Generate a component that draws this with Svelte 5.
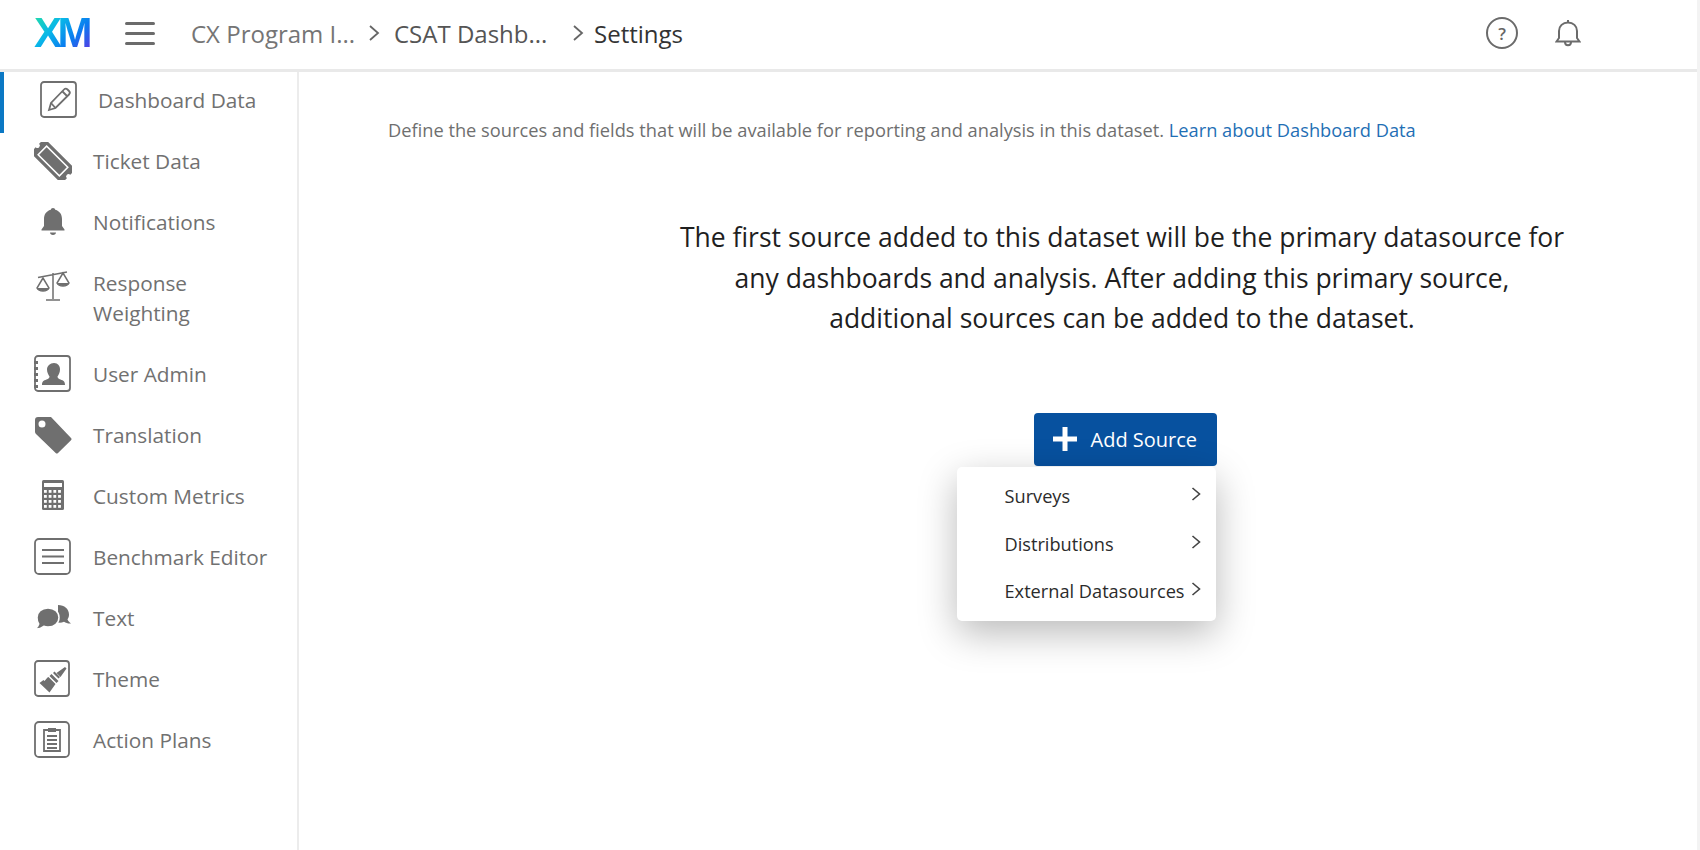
<script>
  const items = [
    { key: 'pencil', label: 'Dashboard Data', active: true },
    { key: 'ticket', label: 'Ticket Data' },
    { key: 'bell', label: 'Notifications' },
    { key: 'scale', label: 'Response Weighting', tall: true },
    { key: 'user', label: 'User Admin' },
    { key: 'tag', label: 'Translation' },
    { key: 'calc', label: 'Custom Metrics' },
    { key: 'lines', label: 'Benchmark Editor' },
    { key: 'chat', label: 'Text' },
    { key: 'brush', label: 'Theme' },
    { key: 'plan', label: 'Action Plans' }
  ];
  const menu = ['Surveys', 'Distributions', 'External Datasources'];
  const calcCells = [];
  for (let r = 0; r < 4; r++) for (let c = 0; c < 4; c++) calcCells.push([10 + c * 4.7, 13 + r * 5]);
  const notches = [[-3, 9], [41, 9], [-3, 29], [41, 29], [-3, 19], [41, 19]];
</script>

<div class="page">
  <header class="top">
    <span class="logo">XM</span>
    <div class="burger"><i></i><i></i><i></i></div>
    <nav class="crumbs">
      <span class="crumb first">CX Program I...</span>
      <svg class="sep" viewBox="0 0 12 18"><path d="M2 2l8 7-8 7" /></svg>
      <span class="crumb second">CSAT Dashb...</span>
      <svg class="sep" viewBox="0 0 12 18"><path d="M2 2l8 7-8 7" /></svg>
      <span class="crumb last">Settings</span>
    </nav>
    <div class="tools">
      <span class="help">?</span>
      <svg class="ring" viewBox="0 0 26 28">
        <path d="M1.500 22.500h23l-2.500-3.500V12c0-5-3.800-8.500-9-8.500S4 7 4 12v7z" />
        <path d="M10 23c0 2 1.300 3.200 3 3.200s3-1.200 3-3.200" />
        <path d="M13 3.500V1" />
      </svg>
    </div>
  </header>

  <div class="body">
    <aside class="side">
      {#each items as item}
        <div class="row" class:active={item.active} class:tall={item.tall}>
          <span class="ico">
            {#if item.key === 'pencil'}
              <svg viewBox="0 0 38 38" class="line">
                <rect x="1" y="1" width="35" height="35" rx="3" />
                <path d="M9 29l2-7L24 8.500c1-1 2.500-1 3.500 0l1.500 1.500c1 1 1 2.500 0 3.500L15.500 27z" />
                <path d="M11 22l4.500 5M22.500 10.500l5 5" />
              </svg>
            {:else if item.key === 'ticket'}
              <svg viewBox="0 0 38 38">
                <g transform="rotate(45 19 19)">
                  <rect class="fill" x="-3" y="9" width="44" height="20" rx="1.500" />
                  <rect class="cut" x="4" y="13" width="30" height="12" />
                  {#each notches as n}
                    <circle class="hole" cx={n[0]} cy={n[1]} r="2.400" />
                  {/each}
                </g>
              </svg>
            {:else if item.key === 'bell'}
              <svg viewBox="0 0 38 38" class="small">
                <path class="fill" d="M19 5c1.300 0 2 .8 2.200 1.800C26 8 28 12 28 16v7l2.500 3.500v1h-23v-1L10 23v-7c0-4 2-8 6.800-9.200C17 5.800 17.700 5 19 5zM16 29.500h6c0 1.500-1.300 2.500-3 2.500s-3-1-3-2.500z" />
              </svg>
            {:else if item.key === 'scale'}
              <svg viewBox="0 0 38 38" class="line thin">
                <path d="M19 5v26M12 32h14M4 9.500L33 4" />
                <path d="M9 10L3 20c2 4 10 4 12 0zM29 5l-6 10c2 4 10 4 12 0z" />
                <path class="fill" d="M3 20h12c-1 4-11 4-12 0zM23 15h12c-1 4-11 4-12 0z" />
              </svg>
            {:else if item.key === 'user'}
              <svg viewBox="0 0 38 38">
                <rect class="outline" x="1" y="1" width="35" height="35" rx="3" />
                <path class="fill" d="M0 6h4v3H0zM0 12h4v3H0zM0 18h4v3H0zM0 24h4v3H0zM0 30h4v3H0z" />
                <path class="fill" d="M20 8c4 0 6 3 6 6.500 0 3-1.500 5.500-2.500 7 0 1.500 1 2.300 3 3 3 1 4.500 2 4.500 5.500H8c0-3.500 1.500-4.500 4.500-5.500 2-.7 3-1.500 3-3-1-1.500-2.500-4-2.500-7C13 11 16 8 20 8z" />
              </svg>
            {:else if item.key === 'tag'}
              <svg viewBox="0 0 38 38">
                <path class="fill" fill-rule="evenodd" d="M4 1h13l20 21c.7.800.7 1.500 0 2.300L24 37c-.8.700-1.500.7-2.300 0L2 18C1 17 1 16 1 15V4c0-2 1-3 3-3zm4 3.500a3.500 3.500 0 100 7 3.500 3.500 0 000-7z" />
              </svg>
            {:else if item.key === 'calc'}
              <svg viewBox="0 0 38 38">
                <rect class="fill" x="8" y="3" width="22" height="30" rx="1.500" />
                <rect class="hole" x="10" y="6" width="18" height="4" />
                {#each calcCells as c}
                  <rect class="hole" x={c[0]} y={c[1]} width="2.800" height="2.800" />
                {/each}
              </svg>
            {:else if item.key === 'lines'}
              <svg viewBox="0 0 38 38" class="line">
                <rect x="1" y="1" width="35" height="35" rx="4" />
                <path d="M8 12h22M8 18.500h22M8 25h22" />
              </svg>
            {:else if item.key === 'chat'}
              <svg viewBox="0 0 38 38">
                <path class="fill" d="M24 6c6.500 0 11 4 11 9.500 0 2-.6 3.500-1.500 5 .5 1.500 1.800 2.800 3.500 4-2.800.2-5-.4-7-1.700-2 .8-4 1-6 .7z" />
                <path class="fill knock" d="M14 9c6.500 0 11 4 11 9.500S20.500 28 14 28c-1.500 0-3-.2-4.200-.7C7 29.500 4 30.300 1 30c2-1.500 3.200-3 3.700-5C3.500 23.300 3 21 3 18.500 3 13 7.500 9 14 9z" />
              </svg>
            {:else if item.key === 'brush'}
              <svg viewBox="0 0 38 38">
                <rect class="outline" x="1" y="1" width="34" height="35" rx="3" />
                <path class="fill" d="M31 7l1.500 1.500-6 8.500-4-4zM20.500 11.500l5.500 5.500-1.500 1.500-5.500-5.500zM17.500 14l7 7-2 2-7-7zM14.500 17l7 7-6 8.500-10-9.500 4-3 1 1 3-3.500z" />
              </svg>
            {:else}
              <svg viewBox="0 0 38 38" class="line">
                <rect x="1" y="1" width="34" height="35" rx="4" />
                <path d="M10 9h16v21H10zM13 15h10M13 19h10M13 23h10M13 27h10" />
                <path class="fill" d="M14 7h8v4h-8z" />
              </svg>
            {/if}
          </span>
          <span class="label">{item.label}</span>
        </div>
      {/each}
    </aside>

    <main class="main">
      <p class="intro">
        Define the sources and fields that will be available for reporting and analysis in this dataset.
        <a href="#learn">Learn about Dashboard Data</a>
      </p>
      <div class="empty">
        <h2>The first source added to this dataset will be the primary datasource for any dashboards and analysis. After adding this primary source, additional sources can be added to the dataset.</h2>
        <div class="add">
          <button class="btn">
            <svg viewBox="0 0 24 24"><path d="M9.500 0h5v9.500H24v5h-9.500V24h-5v-9.500H0v-5h9.500z" /></svg>
            Add Source
          </button>
          <ul class="menu">
            {#each menu as m}
              <li>
                <span>{m}</span>
                <svg viewBox="0 0 10 16"><path d="M1.500 2l7 6-7 6" /></svg>
              </li>
            {/each}
          </ul>
        </div>
      </div>
    </main>
  </div>
</div>

<style>
  :global(body) {
    margin: 0;
    background: #fff;
  }
  .page {
    width: 1700px;
    height: 850px;
    display: flex;
    flex-direction: column;
    overflow: hidden;
    font-family: "Open Sans", "Liberation Sans", sans-serif;
    color: #6f6f6f;
    box-sizing: border-box;
    border-right: 3px solid #f3f3f3;
  }
  .top {
    flex: none;
    display: flex;
    align-items: center;
    border-bottom: 3px solid #e9e9e9;
    padding: 0 0 3px 34px;
    height: 66px;
  }
  .logo {
    width: 58px;
    font-family: "Liberation Sans", sans-serif;
    font-weight: 700;
    font-size: 42px;
    letter-spacing: -4.500px;
    line-height: 42px;
    background: linear-gradient(135deg, #25e0a0 0%, #09b8e8 35%, #0a7bf0 65%, #6a2be0 100%);
    -webkit-background-clip: text;
    background-clip: text;
    color: transparent;
  }
  .burger {
    margin-left: 33px;
    width: 30px;
    display: flex;
    flex-direction: column;
    gap: 7px;
  }
  .burger i {
    height: 3px;
    background: #6b6b6b;
    border-radius: 2px;
  }
  .crumbs {
    margin-left: 36px;
    display: flex;
    align-items: center;
    font-size: 24px;
    white-space: nowrap;
  }
  .crumb.first { width: 177px; color: #757575; }
  .crumb.second { width: 178px; color: #555; margin-left: 14px; }
  .crumb.last { color: #333; margin-left: 10px; }
  .sep {
    width: 12px;
    height: 18px;
    fill: none;
    stroke: #666;
    stroke-width: 1.800;
  }
  .tools {
    margin-left: auto;
    margin-right: 116px;
    display: flex;
    align-items: center;
    gap: 37px;
  }
  .help {
    width: 28px;
    height: 28px;
    border: 2px solid #6b6b6b;
    border-radius: 50%;
    display: flex;
    align-items: center;
    justify-content: center;
    font-size: 17px;
    font-weight: 600;
    color: #666;
  }
  .ring {
    width: 26px;
    height: 28px;
    fill: none;
    stroke: #6b6b6b;
    stroke-width: 2;
  }
  .body {
    flex: 1;
    display: flex;
    min-height: 0;
  }
  .side {
    width: 297px;
    flex: none;
    border-right: 2px solid #ececec;
  }
  .row {
    display: flex;
    align-items: center;
    height: 61px;
    box-sizing: border-box;
    padding: 0 0 5px 34px;
    font-size: 20.800px;
    line-height: 30px;
    color: #717171;
  }
  .row.active {
    border-left: 4px solid #0b78c4;
    padding-left: 36px;
  }
  .row.tall {
    height: 91px;
    align-items: flex-start;
    padding-top: 13px;
  }
  .ico {
    width: 59px;
    flex: none;
    display: flex;
  }
  .row.active .ico { width: 58px; }
  .ico svg {
    width: 38px;
    height: 38px;
  }
  .fill { fill: #6f6f6f; stroke: none; }
  .hole { fill: #fff; }
  .cut { fill: none; stroke: #fff; stroke-width: 1.500; }
  .knock { stroke: #fff; stroke-width: 1.500; }
  .outline { fill: none; stroke: #6f6f6f; stroke-width: 1.800; }
  .line {
    fill: none;
    stroke: #6f6f6f;
    stroke-width: 1.800;
  }
  .line.thin { stroke-width: 1.500; }
  .label { width: 190px; }
  .main {
    flex: 1;
    padding: 43px 0 0 89px;
  }
  .intro {
    margin: 0;
    font-size: 18.250px;
    line-height: 30px;
    color: #6f6f6f;
    white-space: nowrap;
  }
  .intro a {
    color: #1f6fb5;
    text-decoration: none;
  }
  .empty {
    margin: 72px 0 0 284px;
    width: 900px;
    text-align: center;
    display: flex;
    flex-direction: column;
    align-items: center;
  }
  h2 {
    margin: 0;
    font-weight: 400;
    font-size: 26.500px;
    line-height: 40.500px;
    color: #1f1f1f;
    width: 900px;
  }
  .add {
    position: relative;
    margin: 74px 0 0 6px;
  }
  .btn {
    width: 183px;
    height: 53px;
    border: 0;
    border-radius: 4px;
    background: #07519f;
    color: #fff;
    font: 400 20px "Open Sans", sans-serif;
    display: flex;
    align-items: center;
    gap: 14px;
    padding: 0 0 0 19px;
  }
  .btn svg {
    width: 24px;
    height: 24px;
    fill: #fff;
  }
  .menu {
    position: absolute;
    top: 54px;
    right: 1px;
    width: 259px;
    height: 154px;
    box-sizing: border-box;
    margin: 0;
    padding: 6px 0 0 48px;
    list-style: none;
    background: #fff;
    border-radius: 5px;
    box-shadow: 0 12px 38px rgba(0, 0, 0, 0.28);
    text-align: left;
    font-size: 18.200px;
    color: #2b2b2b;
  }
  .menu li {
    height: 47.500px;
    display: flex;
    align-items: center;
    justify-content: space-between;
    padding-right: 15px;
    white-space: nowrap;
  }
  .menu svg {
    width: 10px;
    height: 16px;
    margin-bottom: 4px;
    fill: none;
    stroke: #444;
    stroke-width: 1.600;
  }
</style>
